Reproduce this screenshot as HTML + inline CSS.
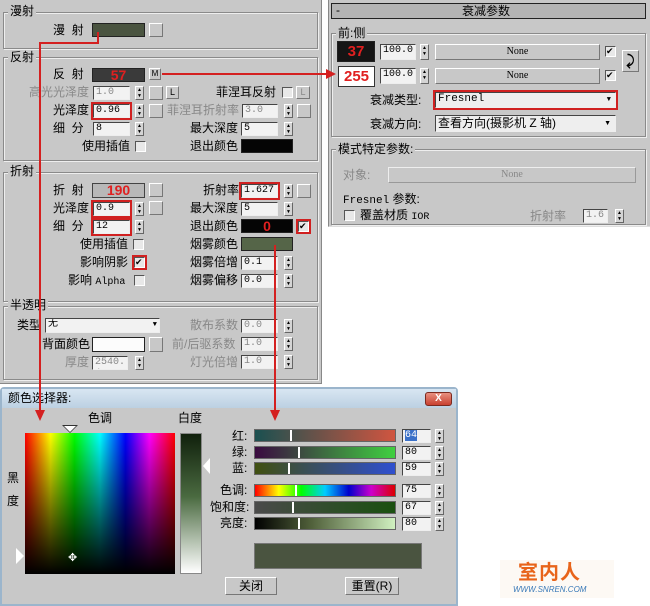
<!DOCTYPE html>
<html><head><meta charset="utf-8"><style>
*{box-sizing:border-box;margin:0;padding:0}
body{width:650px;height:606px;background:#fff;position:relative;overflow:hidden;font-family:"Liberation Sans","Noto Sans CJK SC",sans-serif;font-size:12px;color:#000}
.a{position:absolute}
.t{position:absolute;white-space:nowrap;line-height:14px;font-size:12px}
.g{color:#888}
.grp{position:absolute;border:1px solid #8a8a8a;box-shadow:1px 1px 0 #eee inset,1px 1px 0 #eee}
.lbl{position:absolute;background:#c8c8c8;padding:0 2px;line-height:14px;white-space:nowrap}
.inp{position:absolute;height:14px;background:#f2f2f2;border:1px solid;border-color:#444 #eee #eee #444;font-family:"Liberation Mono",monospace;font-size:10px;line-height:12px;padding-left:2px;overflow:hidden}
.red{outline:2px solid #d02020;outline-offset:0}
.sp{position:absolute;width:9px;height:14px;background:#d4d4d4;border:1px solid;border-color:#fff #666 #666 #fff;font-size:5px;line-height:6px;text-align:center}
.btn{position:absolute;background:#c8c8c8;border:1px solid;border-color:#fff #777 #777 #fff}
.cb{position:absolute;width:11px;height:11px;background:#e8e8e8;border:1px solid;border-color:#555 #fff #fff #555}
.sw{position:absolute;border:1px solid #222}
.num{color:#e02020;font-weight:bold;font-size:14px;text-align:center;line-height:13px}
.sl{position:absolute;left:254px;width:142px;height:13px;border:1px solid #666}
.mk{position:absolute;top:0;width:2px;height:11px;background:#fff}
</style></head><body>

<!-- left panel -->
<div class="a" style="left:0;top:0;width:322px;height:384px;background:#c8c8c8;border-right:1px solid #888;border-bottom:1px solid #888"></div>
<div class="grp" style="left:3px;top:12px;width:315px;height:37px"></div><div class="lbl" style="left:8px;top:4px">漫射</div>
<div class="t" style="left:53px;top:23px">漫&nbsp;&nbsp;射</div>
<div class="sw" style="left:92px;top:23px;width:53px;height:14px;background:#4a5440"></div>
<div class="btn" style="left:149px;top:23px;width:14px;height:14px"></div>

<div class="grp" style="left:3px;top:57px;width:315px;height:104px"></div><div class="lbl" style="left:8px;top:50px">反射</div>
<div class="t" style="left:53px;top:67px">反&nbsp;&nbsp;射</div>
<div class="sw num" style="left:92px;top:68px;width:53px;height:14px;background:#3a3a3a">57</div>
<div class="btn" style="left:149px;top:68px;width:12px;height:12px;font-size:8px;line-height:10px;text-align:center">M</div>
<div class="t g" style="left:29px;top:85px">高光光泽度</div>
<div class="inp g" style="left:93px;top:86px;width:37px">1.0</div><div class="sp" style="left:135px;top:86px">▲<br>▼</div>
<div class="btn" style="left:149px;top:86px;width:14px;height:14px"></div>
<div class="btn" style="left:166px;top:86px;width:13px;height:13px;font-size:9px;line-height:11px;text-align:center">L</div>
<div class="t" style="left:216px;top:85px">菲涅耳反射</div><div class="cb" style="left:282px;top:87px"></div>
<div class="btn g" style="left:296px;top:86px;width:14px;height:13px;font-size:9px;line-height:11px;text-align:center">L</div>
<div class="t" style="left:53px;top:103px">光泽度</div>
<div class="inp red" style="left:93px;top:104px;width:37px">0.96</div><div class="sp" style="left:135px;top:104px">▲<br>▼</div>
<div class="btn" style="left:149px;top:104px;width:14px;height:14px"></div>
<div class="t g" style="left:167px;top:103px">菲涅耳折射率</div>
<div class="inp g" style="left:242px;top:104px;width:36px">3.0</div><div class="sp" style="left:284px;top:104px">▲<br>▼</div>
<div class="btn" style="left:297px;top:104px;width:14px;height:14px"></div>
<div class="t" style="left:53px;top:121px">细&nbsp;&nbsp;分</div>
<div class="inp" style="left:93px;top:122px;width:37px">8</div><div class="sp" style="left:135px;top:122px">▲<br>▼</div>
<div class="t" style="left:190px;top:121px">最大深度</div>
<div class="inp" style="left:241px;top:122px;width:37px">5</div><div class="sp" style="left:284px;top:122px">▲<br>▼</div>
<div class="t" style="left:82px;top:139px">使用插值</div><div class="cb" style="left:135px;top:141px"></div>
<div class="t" style="left:190px;top:139px">退出颜色</div>
<div class="sw" style="left:241px;top:139px;width:52px;height:14px;background:#050505"></div>

<div class="grp" style="left:3px;top:172px;width:315px;height:130px"></div><div class="lbl" style="left:8px;top:164px">折射</div>
<div class="t" style="left:53px;top:183px">折&nbsp;&nbsp;射</div>
<div class="sw num" style="left:92px;top:183px;width:53px;height:15px;background:#b8b8b8;border-color:#444">190</div>
<div class="btn" style="left:149px;top:183px;width:14px;height:14px"></div>
<div class="t" style="left:203px;top:183px">折射率</div>
<div class="inp red" style="left:241px;top:184px;width:37px">1.627</div><div class="sp" style="left:284px;top:184px">▲<br>▼</div>
<div class="btn" style="left:297px;top:184px;width:14px;height:14px"></div>
<div class="t" style="left:53px;top:201px">光泽度</div>
<div class="inp red" style="left:93px;top:202px;width:37px">0.9</div><div class="sp" style="left:135px;top:202px">▲<br>▼</div>
<div class="btn" style="left:149px;top:201px;width:14px;height:14px"></div>
<div class="t" style="left:190px;top:201px">最大深度</div>
<div class="inp" style="left:241px;top:202px;width:37px">5</div><div class="sp" style="left:284px;top:202px">▲<br>▼</div>
<div class="t" style="left:53px;top:219px">细&nbsp;&nbsp;分</div>
<div class="inp red" style="left:93px;top:220px;width:37px">12</div><div class="sp" style="left:135px;top:220px">▲<br>▼</div>
<div class="t" style="left:190px;top:219px">退出颜色</div>
<div class="sw num" style="left:241px;top:219px;width:52px;height:14px;background:#050505">0</div>
<div class="cb red" style="left:298px;top:221px;font-size:9px;line-height:9px">✔</div>
<div class="t" style="left:80px;top:237px">使用插值</div><div class="cb" style="left:133px;top:239px"></div>
<div class="t" style="left:190px;top:237px">烟雾颜色</div>
<div class="sw" style="left:241px;top:237px;width:52px;height:14px;background:#556548"></div>
<div class="t" style="left:80px;top:255px">影响阴影</div><div class="cb red" style="left:134px;top:257px;font-size:9px;line-height:9px">✔</div>
<div class="t" style="left:190px;top:255px">烟雾倍增</div>
<div class="inp" style="left:241px;top:256px;width:37px">0.1</div><div class="sp" style="left:284px;top:256px">▲<br>▼</div>
<div class="t" style="left:68px;top:273px">影响 <span style="font-family:'Liberation Mono';font-size:10px">Alpha</span></div><div class="cb" style="left:134px;top:275px"></div>
<div class="t" style="left:190px;top:273px">烟雾偏移</div>
<div class="inp" style="left:241px;top:274px;width:37px">0.0</div><div class="sp" style="left:284px;top:274px">▲<br>▼</div>

<div class="grp" style="left:3px;top:306px;width:315px;height:74px"></div><div class="lbl" style="left:8px;top:298px">半透明</div>
<div class="t" style="left:17px;top:318px">类型</div>
<div class="inp" style="left:45px;top:318px;width:115px;height:15px">无<span style="position:absolute;right:2px;top:0;font-size:7px">▼</span></div>
<div class="t g" style="left:190px;top:318px">散布系数</div>
<div class="inp g" style="left:241px;top:319px;width:37px">0.0</div><div class="sp" style="left:284px;top:319px">▲<br>▼</div>
<div class="t" style="left:42px;top:337px">背面颜色</div>
<div class="sw" style="left:92px;top:337px;width:53px;height:15px;background:#fcfcfc"></div>
<div class="btn" style="left:149px;top:337px;width:14px;height:15px"></div>
<div class="t g" style="left:172px;top:337px">前/后驱系数</div>
<div class="inp g" style="left:241px;top:337px;width:37px">1.0</div><div class="sp" style="left:284px;top:337px">▲<br>▼</div>
<div class="t g" style="left:65px;top:355px">厚度</div>
<div class="inp g" style="left:92px;top:356px;width:36px">2540.(</div><div class="sp" style="left:135px;top:356px">▲<br>▼</div>
<div class="t g" style="left:190px;top:355px">灯光倍增</div>
<div class="inp g" style="left:241px;top:355px;width:37px">1.0</div><div class="sp" style="left:284px;top:355px">▲<br>▼</div>

<!-- right panel -->
<div class="a" style="left:328px;top:0;width:322px;height:227px;background:#c8c8c8;border-left:1px solid #888;border-bottom:1px solid #ddd"></div>
<div class="a" style="left:331px;top:3px;width:315px;height:16px;background:#b4b4b4;border:1px solid #222"></div>
<div class="t" style="left:336px;top:3px">-</div><div class="t" style="left:462px;top:4px">衰减参数</div>
<div class="grp" style="left:331px;top:33px;width:315px;height:104px"></div><div class="lbl" style="left:336px;top:26px">前:侧</div>
<div class="sw num" style="left:337px;top:41px;width:38px;height:21px;background:#151515;line-height:19px;font-size:15px">37</div>
<div class="inp" style="left:380px;top:44px;width:36px;height:16px">100.0</div><div class="sp" style="left:420px;top:44px;height:16px">▲<br>▼</div>
<div class="btn" style="left:435px;top:44px;width:165px;height:16px;font-family:'Liberation Serif';font-size:10px;text-align:center;line-height:14px">None</div>
<div class="cb" style="left:605px;top:46px;font-size:9px;line-height:9px">✔</div>
<div class="btn" style="left:622px;top:50px;width:17px;height:22px;font-size:14px;line-height:19px;text-align:center;font-weight:bold">⤸</div>
<div class="sw num" style="left:338px;top:66px;width:37px;height:21px;background:#fff;line-height:19px;font-size:15px;border-color:#333">255</div>
<div class="inp" style="left:380px;top:68px;width:36px;height:16px">100.0</div><div class="sp" style="left:420px;top:68px;height:16px">▲<br>▼</div>
<div class="btn" style="left:435px;top:68px;width:165px;height:16px;font-family:'Liberation Serif';font-size:10px;text-align:center;line-height:14px">None</div>
<div class="cb" style="left:605px;top:70px;font-size:9px;line-height:9px">✔</div>
<div class="t" style="left:370px;top:93px">衰减类型:</div>
<div class="inp red" style="left:435px;top:92px;width:181px;height:16px;background:#eee;font-size:11px">Fresnel<span style="position:absolute;right:4px;top:1px;font-size:7px">▼</span></div>
<div class="t" style="left:370px;top:117px">衰减方向:</div>
<div class="inp" style="left:435px;top:115px;width:181px;height:17px;background:#eee;font-family:'Liberation Sans','Noto Sans CJK SC';font-size:12px;line-height:14px">查看方向(摄影机 Z 轴)<span style="position:absolute;right:4px;top:1px;font-size:7px">▼</span></div>
<div class="grp" style="left:331px;top:149px;width:315px;height:76px"></div><div class="lbl" style="left:336px;top:142px">模式特定参数:</div>
<div class="t g" style="left:343px;top:168px">对象:</div>
<div class="btn g" style="left:388px;top:167px;width:248px;height:16px;font-family:'Liberation Serif';font-size:10px;text-align:center;line-height:14px;border-color:#eee #999 #999 #eee">None</div>
<div class="t" style="left:343px;top:192px"><span style="font-family:'Liberation Mono';font-size:11px">Fresnel</span> 参数:</div>
<div class="cb" style="left:344px;top:210px"></div>
<div class="t" style="left:360px;top:208px">覆盖材质 <span style="font-family:'Liberation Mono';font-size:10px">IOR</span></div>
<div class="t g" style="left:530px;top:209px">折射率</div>
<div class="inp g" style="left:583px;top:209px;width:25px">1.6</div><div class="sp" style="left:615px;top:209px">▲<br>▼</div>

<!-- dialog -->
<div class="a" style="left:0;top:387px;width:458px;height:219px;background:#c8c8c8;border:2px solid #9bb5cc;border-radius:4px 4px 0 0"></div>
<div class="a" style="left:2px;top:389px;width:454px;height:19px;background:linear-gradient(#d8e6f2,#bcd0e2)"></div>
<div class="t" style="left:8px;top:391px">颜色选择器:</div>
<div class="a" style="left:425px;top:392px;width:27px;height:14px;background:linear-gradient(#e89080,#c84030);border:1px solid #7a2a20;border-radius:3px;color:#fff;font-size:10px;text-align:center;line-height:12px;font-weight:bold">X</div>
<div class="t" style="left:88px;top:411px">色调</div>
<div class="t" style="left:178px;top:411px">白度</div>
<div class="a" style="left:62px;top:425px;width:0;height:0;border-left:8px solid transparent;border-right:8px solid transparent;border-top:8px solid #333"></div>
<div class="a" style="left:64px;top:426px;width:0;height:0;border-left:6px solid transparent;border-right:6px solid transparent;border-top:6px solid #fff"></div>
<div class="a" style="left:25px;top:433px;width:150px;height:141px;background:linear-gradient(rgba(0,0,0,0),#000),linear-gradient(90deg,#f00,#ff0 17%,#0f0 33%,#0ff 50%,#00f 67%,#f0f 83%,#f00)"></div>
<div class="t" style="left:68px;top:551px;color:#fff;font-size:11px">✥</div>
<div class="t" style="left:7px;top:471px">黑</div><div class="t" style="left:7px;top:494px">度</div>
<div class="a" style="left:16px;top:548px;border-top:8px solid transparent;border-bottom:8px solid transparent;border-left:8px solid #fff;width:0;height:0"></div>
<div class="a" style="left:180px;top:433px;width:22px;height:141px;border:1px solid #888;background:linear-gradient(#10200c,#4a6a40 45%,#fff)"></div>
<div class="a" style="left:203px;top:458px;border-top:8px solid transparent;border-bottom:8px solid transparent;border-right:7px solid #fff;width:0;height:0"></div>
<div class="t" style="left:232px;top:429px">红:</div>
<div class="t" style="left:232px;top:445px">绿:</div>
<div class="t" style="left:232px;top:461px">蓝:</div>
<div class="t" style="left:220px;top:483px">色调:</div>
<div class="t" style="left:210px;top:500px">饱和度:</div>
<div class="t" style="left:220px;top:516px">亮度:</div>
<div class="sl" style="top:429px;background:linear-gradient(90deg,#1a5050,#d05540)"><div class="mk" style="left:35px"></div></div>
<div class="sl" style="top:446px;background:linear-gradient(90deg,#3a0a40,#40d040)"><div class="mk" style="left:43px"></div></div>
<div class="sl" style="top:462px;background:linear-gradient(90deg,#405010,#3050d0)"><div class="mk" style="left:33px"></div></div>
<div class="sl" style="top:484px;background:linear-gradient(90deg,#f00,#ff0 17%,#0f0 33%,#0cf 50%,#00c 67%,#c0c 83%,#d00)"><div class="mk" style="left:40px"></div></div>
<div class="sl" style="top:501px;background:linear-gradient(90deg,#4a4a4a,#1a5010)"><div class="mk" style="left:37px"></div></div>
<div class="sl" style="top:517px;background:linear-gradient(90deg,#000,#50603a 40%,#d0f0c0)"><div class="mk" style="left:43px"></div></div>
<div class="inp" style="left:402px;top:429px;width:29px"><span style="background:#3a70c8;color:#fff">64</span></div>
<div class="inp" style="left:402px;top:446px;width:29px">80</div>
<div class="inp" style="left:402px;top:462px;width:29px">59</div>
<div class="inp" style="left:402px;top:484px;width:29px">75</div>
<div class="inp" style="left:402px;top:501px;width:29px">67</div>
<div class="inp" style="left:402px;top:517px;width:29px">80</div>
<div class="sp" style="left:435px;top:429px">▲<br>▼</div><div class="sp" style="left:435px;top:446px">▲<br>▼</div><div class="sp" style="left:435px;top:462px">▲<br>▼</div>
<div class="sp" style="left:435px;top:484px">▲<br>▼</div><div class="sp" style="left:435px;top:501px">▲<br>▼</div><div class="sp" style="left:435px;top:517px">▲<br>▼</div>
<div class="a" style="left:254px;top:543px;width:168px;height:26px;background:#4a5440;border:1px solid #777"></div>
<div class="btn" style="left:225px;top:577px;width:52px;height:18px;text-align:center;line-height:16px">关闭</div>
<div class="btn" style="left:345px;top:577px;width:54px;height:18px;text-align:center;line-height:16px">重置(R)</div>

<!-- logo -->
<div class="a" style="left:500px;top:560px;width:114px;height:38px;background:#fdf9f4"></div>
<div class="t" style="left:518px;top:562px;color:#e8641a;font-size:20px;line-height:22px;font-weight:bold;letter-spacing:1px">室内人</div>
<div class="t" style="left:513px;top:585px;color:#3a7ab8;font-size:8px;line-height:9px;font-style:italic">WWW.SNREN.COM</div>

<!-- red lines -->
<svg class="a" style="left:0;top:0" width="650" height="606">
<g stroke="#d42020" stroke-width="2" fill="none">
<polyline points="98,32 98,43 40,43 40,412"/>
<line x1="275" y1="245" x2="275" y2="412"/>
<line x1="162" y1="74" x2="328" y2="74"/>
</g>
<g fill="#d42020">
<polygon points="35,410 45,410 40,421"/>
<polygon points="270,410 280,410 275,421"/>
<polygon points="326,69 326,79 336,74"/>
</g>
</svg>
</body></html>
